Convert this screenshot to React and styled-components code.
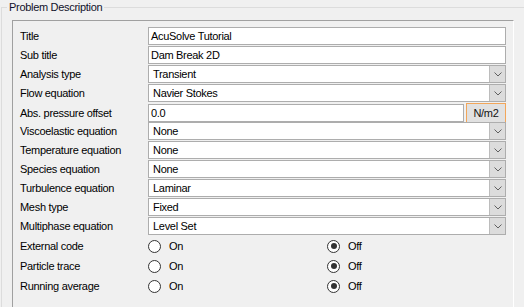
import React from 'react';
import styled, { createGlobalStyle } from 'styled-components';

const GlobalStyle = createGlobalStyle`
  html, body {
    margin: 0;
    background: #f0f0f0;
    overflow: hidden;
  }
  body {
    font-family: "Liberation Sans", Arial, sans-serif;
    font-size: 11px;
    letter-spacing: -0.3px;
    color: #000;
  }
`;

const Group = styled.fieldset`
  margin: 1px 0 0 1px;
  padding: 6px 0 0 10px;
  border: 1px solid #dcdcdc;
  border-right: 0;
  border-bottom: 0;
  min-width: 0;
`;

const Legend = styled.legend`
  padding: 0 2px;
  margin-left: -5px;
  line-height: 13px;
  color: #10102a;
`;

/* sunken panel, its bottom edge lies below the window */
const Panel = styled.div`
  width: 486px;
  height: 280px;
  padding: 6px 7px 0 7px;
  border: 1px solid;
  border-color: #a0a0a0 #fff #fff #a0a0a0;
  border-bottom: 0;
`;

const Row = styled.div`
  display: grid;
  grid-template-columns: 128px 1fr;
  align-items: center;
  height: ${({ tall }) => (tall ? '20px' : '18px')};
  margin-bottom: ${({ tall }) => (tall ? '0' : '1px')};
`;

const Label = styled.span`
  white-space: nowrap;
`;

const Box = styled.div`
  height: 18px;
  box-sizing: border-box;
  border: 1px solid #adadad;
  background: #fff;
  display: flex;
  align-items: center;
  padding-left: ${({ combo }) => (combo ? '4px' : '2px')};
  white-space: nowrap;
`;

const ArrowButton = styled.div`
  margin-left: auto;
  align-self: stretch;
  width: 15px;
  background: #dcdcdc;
  border-left: 1px solid #bcbcbc;
  display: flex;
  align-items: center;
  justify-content: center;
`;

const Split = styled.div`
  display: grid;
  grid-template-columns: 1fr 40px;
  gap: 2px;
  align-items: center;
`;

const UnitButton = styled.div`
  height: 20px;
  box-sizing: border-box;
  border: 1px solid #f2a65a;
  background: #e1e1e1;
  display: flex;
  align-items: center;
  justify-content: center;
  color: #111;
`;

const RadioGroup = styled.div`
  display: grid;
  grid-template-columns: 179px auto;
  align-items: center;
`;

const Option = styled.div`
  display: flex;
  align-items: center;
  gap: 8px;
`;

const Circle = styled.span`
  width: 13px;
  height: 13px;
  box-sizing: border-box;
  border-radius: 50%;
  border: 1px solid #333;
  background: #fff;
  display: flex;
  align-items: center;
  justify-content: center;

  &::after {
    content: '';
    width: 6px;
    height: 6px;
    border-radius: 50%;
    background: ${({ checked }) => (checked ? '#333' : 'transparent')};
  }
`;

const Chevron = () => (
  <svg width="8" height="5" viewBox="0 0 8 5">
    <path d="M0.5 0.5 L4 4 L7.5 0.5" fill="none" stroke="#606060" strokeWidth="1" />
  </svg>
);

const TextField = ({ label, value }) => (
  <Row>
    <Label>{label}</Label>
    <Box>{value}</Box>
  </Row>
);

const Combo = ({ label, value }) => (
  <Row>
    <Label>{label}</Label>
    <Box combo>
      {value}
      <ArrowButton>
        <Chevron />
      </ArrowButton>
    </Box>
  </Row>
);

const Radio = ({ label, on }) => (
  <Row tall>
    <Label>{label}</Label>
    <RadioGroup>
      <Option>
        <Circle checked={on} />
        On
      </Option>
      <Option>
        <Circle checked={!on} />
        Off
      </Option>
    </RadioGroup>
  </Row>
);

const combos = [
  ['Viscoelastic equation', 'None'],
  ['Temperature equation', 'None'],
  ['Species equation', 'None'],
  ['Turbulence equation', 'Laminar'],
  ['Mesh type', 'Fixed'],
  ['Multiphase equation', 'Level Set'],
];

const App = () => (
  <>
    <GlobalStyle />
    <Group>
      <Legend>Problem Description</Legend>
      <Panel>
        <TextField label="Title" value="AcuSolve Tutorial" />
        <TextField label="Sub title" value="Dam Break 2D" />
        <Combo label="Analysis type" value="Transient" />
        <Combo label="Flow equation" value="Navier Stokes" />
        <Row>
          <Label>Abs. pressure offset</Label>
          <Split>
            <Box>0.0</Box>
            <UnitButton>N/m2</UnitButton>
          </Split>
        </Row>
        {combos.map(([label, value]) => (
          <Combo key={label} label={label} value={value} />
        ))}
        <Radio label="External code" />
        <Radio label="Particle trace" />
        <Radio label="Running average" />
      </Panel>
    </Group>
  </>
);

export default App;
